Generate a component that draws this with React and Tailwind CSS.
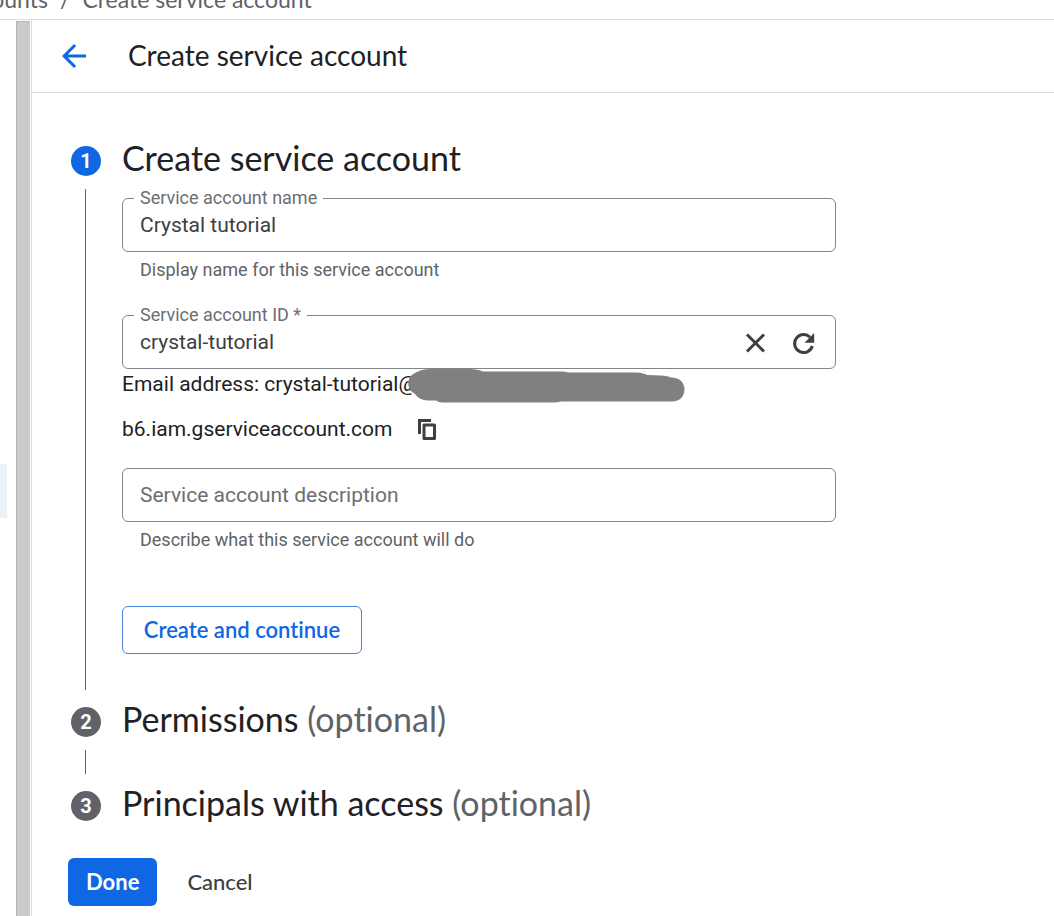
import React, { useState } from "react";

function BackIcon() {
  return (
    <svg viewBox="0 0 24 24" className="w-9 h-9" fill="currentColor" aria-hidden="true">
      <path d="M20 11H7.83l5.59-5.59L12 4l-8 8 8 8 1.41-1.41L7.83 13H20v-2z" />
    </svg>
  );
}

function CloseIcon() {
  return (
    <svg viewBox="0 0 27 27" className="w-[27px] h-[27px]" fill="none" stroke="currentColor" strokeWidth="3" aria-hidden="true">
      <path d="M5 5.5l17 17M22 5.5l-17 17" />
    </svg>
  );
}

function RefreshIcon() {
  return (
    <svg viewBox="0 0 32 32" className="w-8 h-8" fill="none" aria-hidden="true">
      <path d="M25.3 20A9 9 0 1 1 23 11.2" stroke="currentColor" strokeWidth="3" />
      <path d="M27.2 7v9.7h-9.7z" fill="currentColor" />
    </svg>
  );
}

function CopyIcon() {
  return (
    <svg viewBox="0 0 27 27" className="w-[27px] h-[27px]" fill="none" stroke="currentColor" strokeWidth="3" aria-hidden="true">
      <path d="M5.5 18V4.5H17" />
      <path d="M10 9h10.5v13.5H10z" strokeLinejoin="round" />
    </svg>
  );
}

function Redaction() {
  return (
    <svg
      viewBox="0 0 277 34"
      className="absolute left-[286px] top-0 w-[277px] h-[34px]"
      fill="#808080"
      aria-hidden="true"
    >
      <path d="M14 1Q18 0 24 0H62Q70 0 75 2.5H154Q158 2.5 160 3.5H229Q236 4 239 6L253 6.5Q260 7 263 8.5C272 8.5 276.5 14 276.5 20.5C276.5 27 272 32.5 264 32.5H153Q150 33.5 145 33.5H34Q31 33.5 28 31.5H20Q11 31 7 25Q0 21 0 13Q2 4 14 1z" />
    </svg>
  );
}

function Field({ id, label, hint, value, onChange, children }) {
  return (
    <div className="w-full">
      <div className="relative flex items-center h-[54px] border border-[#80868b] rounded-[6px]">
        <label
          htmlFor={id}
          className="absolute left-[11px] -top-[13px] px-[6px] bg-white text-lg leading-6 text-[#6b6e73]"
        >
          {label}
        </label>
        <input
          id={id}
          value={value}
          onChange={onChange}
          className="flex-1 min-w-0 px-[17px] bg-transparent text-[21px] leading-7 text-[#3c4043] outline-none"
        />
        {children}
      </div>
      {hint && <p className="mt-[6px] pl-[18px] text-lg leading-6 text-[#5f6368]">{hint}</p>}
    </div>
  );
}

function Step({ number, title, optional, active, last, children }) {
  return (
    <li className="flex gap-[21px]">
      <div className="flex flex-col w-[30px] shrink-0">
        <span
          className={`flex items-center justify-center w-[30px] h-[30px] rounded-full text-white text-xl font-bold ${
            active ? "bg-[#1067e3]" : "bg-[#5f6368]"
          }`}
        >
          {number}
        </span>
        {!last && <span className="flex-1 w-px min-h-6 ml-[14px] mt-[13px] mb-[17px] bg-[#5f6368]" />}
      </div>
      <div className="flex-1 min-w-0">
        <h2 className="font-['Lato','Roboto',sans-serif] text-[34px] leading-6 text-[#202124]">
          {title}
          {optional && <span className="text-[#5f6368]"> (optional)</span>}
        </h2>
        {children}
      </div>
    </li>
  );
}

export default function App() {
  const [name, setName] = useState("Crystal tutorial");
  const [accountId, setAccountId] = useState("crystal-tutorial");
  const [description, setDescription] = useState("");

  return (
    <div className="flex flex-col min-h-screen bg-white font-['Roboto',sans-serif] text-[#202124] [font-variant-ligatures:none]">
      <nav className="flex items-end h-5 pb-2 overflow-hidden border-b border-[#dadce0] font-['Lato','Roboto',sans-serif] text-[23px] leading-6 text-[#5f6368]">
        <a href="#accounts" className="flex justify-end w-12 shrink-0">accounts</a>
        <span className="px-3">/</span>
        <span className="whitespace-nowrap">Create service account</span>
      </nav>

      <div className="flex flex-1">
        <aside className="w-4 shrink-0 pt-[444px]">
          <div className="w-[7px] h-[54px] bg-[#eaf2f8]" />
        </aside>
        <div className="w-[14px] shrink-0 mt-px bg-[#cbcbcb] border-l border-t border-[#b4b4b4]" />

        <main className="flex-1 min-w-0 ml-px border-l border-[#dadce0]">
          <header className="flex items-center h-[73px] pl-6 gap-9 border-b border-[#dadce0]">
            <button aria-label="Back" className="text-[#1067e3]">
              <BackIcon />
            </button>
            <h1 className="pb-[2px] font-['Lato','Roboto',sans-serif] text-[28px] leading-9">Create service account</h1>
          </header>

          <ol className="pt-[53px] pl-[39px] pr-6">
            <Step number={1} title="Create service account" active>
              <div className="flex flex-col max-w-[714px] pt-7 pb-[53px]">
                <Field
                  id="account-name"
                  label="Service account name"
                  hint="Display name for this service account"
                  value={name}
                  onChange={(e) => setName(e.target.value)}
                />
                <div className="mt-[33px]">
                  <Field
                    id="account-id"
                    label="Service account ID *"
                    value={accountId}
                    onChange={(e) => setAccountId(e.target.value)}
                  >
                    <div className="flex items-center gap-[18px] pr-4 text-[#3c4043]">
                      <button aria-label="Clear" onClick={() => setAccountId("")}>
                        <CloseIcon />
                      </button>
                      <button aria-label="Refresh" onClick={() => setAccountId("crystal-tutorial")}>
                        <RefreshIcon />
                      </button>
                    </div>
                  </Field>
                </div>

                <div className="relative text-[21px] leading-[30px]">
                  Email address: crystal-tutorial@
                  <Redaction />
                </div>
                <div className="flex items-center gap-[22px] h-[42px] mt-[9px] text-[21px] leading-7">
                  b6.iam.gserviceaccount.com
                  <button aria-label="Copy email address" className="text-[#3c4043]">
                    <CopyIcon />
                  </button>
                </div>

                <div className="mt-[18px]">
                  <input
                    id="account-description"
                    aria-label="Service account description"
                    placeholder="Service account description"
                    value={description}
                    onChange={(e) => setDescription(e.target.value)}
                    className="block w-full h-[54px] px-[17px] border border-[#80868b] rounded-[6px] text-[21px] leading-7 text-[#3c4043] placeholder:text-[#6b6e73] outline-none"
                  />
                  <p className="mt-[6px] pl-[18px] text-lg leading-6 text-[#5f6368]">
                    Describe what this service account will do
                  </p>
                </div>

                <button className="self-start min-w-60 h-12 px-[18px] pb-[2px] mt-[54px] border border-[#4a83d8] rounded-[6px] font-['Lato','Roboto',sans-serif] text-[22px] font-semibold text-[#1067e3]">
                  Create and continue
                </button>
              </div>
            </Step>
            <Step number={2} title="Permissions" optional />
            <Step number={3} title="Principals with access" optional last />
          </ol>

          <div className="flex items-center gap-3 pl-9 pt-[37px] pb-2 font-['Lato','Roboto',sans-serif] text-[22px]">
            <button className="h-12 px-[18px] pb-[2px] rounded-[6px] bg-[#1067e3] text-white font-bold">Done</button>
            <button className="h-12 px-[18px] pb-[2px] text-[#3c4043] font-medium">Cancel</button>
          </div>
        </main>
      </div>
    </div>
  );
}
